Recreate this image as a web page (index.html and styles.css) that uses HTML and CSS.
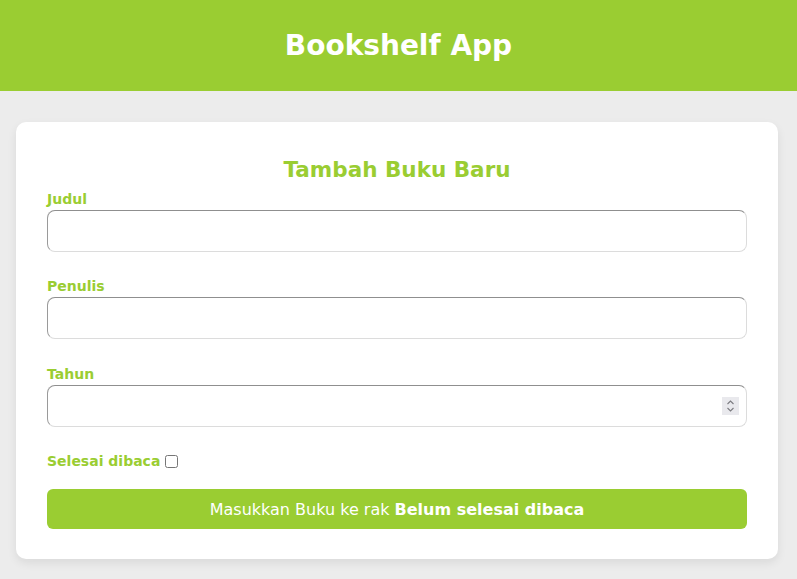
FILE: index.html
```html
<!DOCTYPE html>
<html lang="id">
<head>
<meta charset="utf-8">
<title>Bookshelf App</title>
<link rel="stylesheet" href="styles.css">
</head>
<body>
<header class="head">
  <h1 class="head-title">Bookshelf App</h1>
</header>
<main class="main">
  <section class="card">
    <h2 class="card-title">Tambah Buku Baru</h2>
    <form class="form">
      <div class="field">
        <label class="label" for="judul">Judul</label>
        <input class="input" id="judul" type="text">
      </div>
      <div class="field">
        <label class="label" for="penulis">Penulis</label>
        <input class="input" id="penulis" type="text">
      </div>
      <div class="field field-last">
        <label class="label" for="tahun">Tahun</label>
        <div class="num-wrap">
          <input class="input" id="tahun" type="number">
          <svg class="spin" width="17" height="18" viewBox="0 0 17 18" aria-hidden="true">
            <rect width="17" height="18" fill="#e9e9ed"/>
            <path d="M5.5 7 L8.5 4 L11.5 7" fill="none" stroke="#7b7b80" stroke-width="1.1"/>
            <path d="M5.5 11 L8.5 14 L11.5 11" fill="none" stroke="#7b7b80" stroke-width="1.1"/>
          </svg>
        </div>
      </div>
      <div class="check-row">
        <label class="label" for="selesai">Selesai dibaca</label>
        <input class="check" id="selesai" type="checkbox">
      </div>
      <button class="submit" type="button">Masukkan Buku ke rak <b class="submit-strong">Belum selesai dibaca</b></button>
    </form>
  </section>
</main>
</body>
</html>
```
FILE: styles.css
```css
* { box-sizing: border-box; }
html, body { margin: 0; padding: 0; }
body {
  background: #ececec;
  font-family: "DejaVu Sans", sans-serif;
  height: 579px;
  overflow: hidden;
}
.head {
  background: #9acd32;
  height: 91px;
  display: flex;
  align-items: center;
  justify-content: center;
}
.head-title {
  margin: 0;
  color: #fff;
  font-size: 28px;
  font-weight: 700;
}
.main {
  padding: 31px 19px 0 16px;
}
.card {
  background: #fff;
  border-radius: 10px;
  box-shadow: 0 4px 10px rgba(0,0,0,0.08);
  padding: 34px 31px 30px;
}
.card-title {
  margin: 0 0 6px;
  text-align: center;
  color: #9acd32;
  font-size: 21.5px;
  font-weight: 700;
  line-height: 28px;
}
.form { display: flex; flex-direction: column; }
.field { display: flex; flex-direction: column; margin-bottom: 25px; }
.field-last { margin-bottom: 24px; }
.field + .field-last { margin-top: 1px; }
.label {
  color: #9acd32;
  font-weight: 700;
  font-size: 14px;
  line-height: 18px;
}
.num-wrap { position: relative; margin-top: 2px; }
.num-wrap .input { margin-top: 0; }
.input {
  margin-top: 2px;
  height: 42px;
  width: 100%;
  border: 1px solid;
  border-color: #8f8f8f #dcdcdc #dcdcdc #9a9a9a;
  border-radius: 8px;
  padding: 4px 12px;
  font-family: inherit;
  font-size: 14px;
}
.spin {
  position: absolute;
  right: 8px;
  top: 12px;
}
.check-row { display: flex; align-items: center; gap: 3px; margin-top: 1px; }
.check { margin: 0 0 0 2px; width: 13px; height: 13px; }
.submit {
  margin-top: 19px;
  height: 40px;
  border: 0;
  border-radius: 6px;
  background: #9acd32;
  color: #fff;
  font-family: inherit;
  font-size: 16px;
  font-weight: 400;
}
.submit-strong { font-weight: 700; }
```
